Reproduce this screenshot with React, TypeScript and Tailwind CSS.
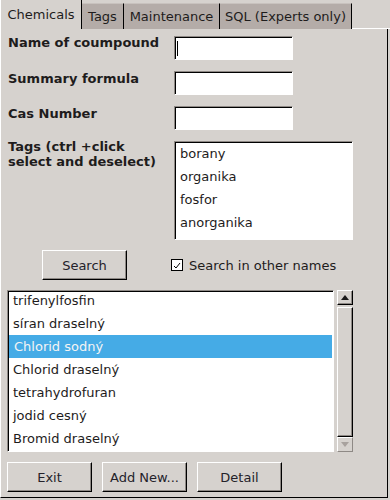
import React from "react";

const tags = ["borany", "organika", "fosfor", "anorganika"];
const chemicals = [
  "trifenylfosfin",
  "síran draselný",
  "Chlorid sodný",
  "Chlorid draselný",
  "tetrahydrofuran",
  "jodid cesný",
  "Bromid draselný",
];

const raised =
  "border border-t-white border-l-white border-r-black border-b-black shadow-[inset_-1px_-1px_0_#8e8985]";
const sunken =
  "bg-white border border-t-[#8e8985] border-l-[#8e8985] border-r-white border-b-white shadow-[inset_1px_1px_0_#000]";

function Entry({ caret }: { caret?: boolean }) {
  return (
    <div className={`w-[119px] h-[24px] flex items-center ${sunken}`}>
      {caret && <div className="ml-[2px] w-px h-[15px] bg-black" />}
    </div>
  );
}

function TkButton({ label, className = "" }: { label: string; className?: string }) {
  return (
    <div className={`w-[85px] h-[30px] flex items-center justify-center text-[#24222a] ${raised} ${className}`}>
      {label}
    </div>
  );
}

export default function App() {
  return (
    <div className="w-[390px] h-[500px] bg-[#d6d2ce] text-[13px] leading-[15px] text-[#1e1c1c] font-['DejaVu_Sans',sans-serif] flex flex-col">
      {/* notebook tabs */}
      <div className="h-[29px] flex items-end">
        <div className="w-[82px] h-[29px] flex items-center justify-center border-r border-r-black border-l border-l-white">
          Chemicals
        </div>
        <div className="w-[42px] h-[26px] flex items-center justify-center bg-[#b4aca8] border-t border-t-[#c8c2be] border-r border-r-black">
          Tags
        </div>
        <div className="w-[96px] h-[26px] flex items-center justify-center bg-[#b4aca8] border-t border-t-[#c8c2be] border-r border-r-black">
          Maintenance
        </div>
        <div className="w-[132px] h-[26px] flex items-center justify-center bg-[#b4aca8] border-t border-t-[#c8c2be] border-r border-r-black">
          SQL (Experts only)
        </div>
        <div className="flex-1 h-px bg-white" />
      </div>

      {/* panel */}
      <div className="w-[388px] h-[469px] border-l border-l-white border-r border-r-black border-b border-b-black flex flex-col pl-[6px] pt-[7px]">
        <div className="flex items-start">
          <div className="w-[167px] pl-[1px] -mt-[1px] font-bold">Name of coumpound</div>
          <Entry caret />
        </div>
        <div className="flex items-start mt-[11px]">
          <div className="w-[167px] pl-[1px] font-bold">Summary formula</div>
          <Entry />
        </div>
        <div className="flex items-start mt-[11px]">
          <div className="w-[167px] pl-[1px] font-bold">Cas Number</div>
          <Entry />
        </div>
        <div className="flex items-start mt-[11px]">
          <div className="w-[167px] pl-[1px] -mt-[2px] font-bold">
            Tags (ctrl +click
            <br />
            select and deselect)
          </div>
          <div className={`w-[179px] h-[99px] overflow-hidden ${sunken}`}>
            {tags.map((t) => (
              <div key={t} className="h-[23px] flex items-center pl-[5px]">
                {t}
              </div>
            ))}
          </div>
        </div>

        <div className="flex items-center mt-[10px]">
          <TkButton label="Search" className="ml-[35px]" />
          <div className="ml-[44px] w-[12px] h-[12px] bg-white border border-black flex items-end justify-start">
            <svg width="10" height="10" viewBox="0 0 10 10">
              <polyline points="2,6 4,8 8,3" fill="none" stroke="#000" strokeWidth="1" />
            </svg>
          </div>
          <span className="ml-[6px]">Search in other names</span>
        </div>

        <div className="flex items-start mt-[10px]">
          <div className={`w-[327px] h-[162px] overflow-hidden ${sunken}`}>
            <div className="-mt-[2px]">
              {chemicals.map((c, i) => (
                <div
                  key={c}
                  className={`h-[23px] flex items-center pl-[5px] ${
                    i === 2 ? "bg-[#45abe6] text-[#f4f4f4] mx-[1px] pl-[4px]" : ""
                  }`}
                >
                  {c}
                </div>
              ))}
            </div>
          </div>
          {/* scrollbar */}
          <div className="ml-[3px] w-[16px] h-[162px] flex flex-col">
            <div className={`h-[15px] flex items-center justify-center ${raised}`}>
              <svg width="8" height="5" viewBox="0 0 8 5">
                <polygon points="0,5 8,5 4,0" fill="#1a1a1a" />
              </svg>
            </div>
            <div className={`mt-[2px] flex-1 ${raised}`} />
            <div className="h-[15px] flex items-center justify-center border border-t-white border-l-white border-r-[#8e8985] border-b-[#8e8985]">
              <svg width="8" height="5" viewBox="0 0 8 5">
                <polygon points="0,0 8,0 4,5" fill="#a8a29e" />
              </svg>
            </div>
          </div>
        </div>

        <div className="flex items-center gap-[10px] mt-[10px]">
          <TkButton label="Exit" />
          <TkButton label="Add New..." />
          <TkButton label="Detail" />
        </div>
      </div>
    </div>
  );
}
